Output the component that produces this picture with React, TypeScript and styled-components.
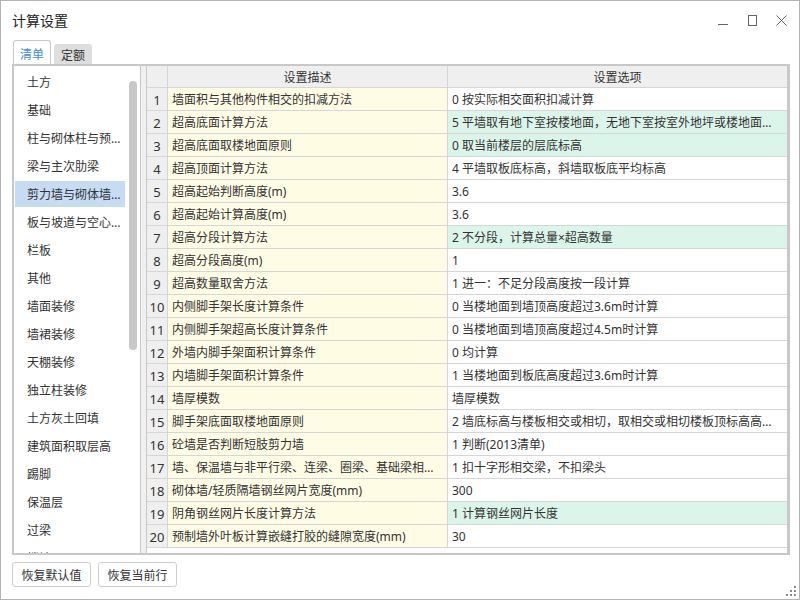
import styled, { createGlobalStyle } from "styled-components"

const GlobalStyle = createGlobalStyle`
  html, body {
    margin: 0;
    padding: 0;
    width: 800px;
    height: 600px;
    overflow: hidden;
    background: #fff;
  }
  * { box-sizing: border-box; }
`

const FONT = `"Noto Sans", "Noto Sans CJK SC", sans-serif`

const categories = [
    "土方", "基础", "柱与砌体柱与预制柱", "梁与主次肋梁", "剪力墙与砌体墙与保温墙",
    "板与坡道与空心楼盖", "栏板", "其他", "墙面装修", "墙裙装修", "天棚装修", "独立柱装修",
    "土方灰土回填", "建筑面积取层高", "踢脚", "保温层", "过梁", "楼地面",
]

interface IRow {
    desc: string;
    value: string;
    hl?: boolean
}

const rows: IRow[] = [
    {desc: "墙面积与其他构件相交的扣减方法", value: "0 按实际相交面积扣减计算"},
    {desc: "超高底面计算方法", value: "5 平墙取有地下室按楼地面，无地下室按室外地坪或楼地面标高；斜墙取底面平均标高", hl: true},
    {desc: "超高底面取楼地面原则", value: "0 取当前楼层的层底标高", hl: true},
    {desc: "超高顶面计算方法", value: "4 平墙取板底标高，斜墙取板底平均标高"},
    {desc: "超高起始判断高度(m)", value: "3.6"},
    {desc: "超高起始计算高度(m)", value: "3.6"},
    {desc: "超高分段计算方法", value: "2 不分段，计算总量×超高数量", hl: true},
    {desc: "超高分段高度(m)", value: "1"},
    {desc: "超高数量取舍方法", value: "1 进一：不足分段高度按一段计算"},
    {desc: "内侧脚手架长度计算条件", value: "0 当楼地面到墙顶高度超过3.6m时计算"},
    {desc: "内侧脚手架超高长度计算条件", value: "0 当楼地面到墙顶高度超过4.5m时计算"},
    {desc: "外墙内脚手架面积计算条件", value: "0 均计算"},
    {desc: "内墙脚手架面积计算条件", value: "1 当楼地面到板底高度超过3.6m时计算"},
    {desc: "墙厚模数", value: "墙厚模数"},
    {desc: "脚手架底面取楼地面原则", value: "2 墙底标高与楼板相交或相切，取相交或相切楼板顶标高高于墙底标高者"},
    {desc: "砼墙是否判断短肢剪力墙", value: "1 判断(2013清单)"},
    {desc: "墙、保温墙与非平行梁、连梁、圈梁、基础梁相交的扣减方法", value: "1 扣十字形相交梁，不扣梁头"},
    {desc: "砌体墙/轻质隔墙钢丝网片宽度(mm)", value: "300"},
    {desc: "阴角钢丝网片长度计算方法", value: "1 计算钢丝网片长度", hl: true},
    {desc: "预制墙外叶板计算嵌缝打胶的缝隙宽度(mm)", value: "30"},
]

const Window = styled.div`
  position: relative;
  width: 800px;
  height: 600px;
  border: 1px solid #b4b4b4;
  background: #fff;
  display: flex;
  flex-direction: column;
  font-family: ${FONT};
  color: #333;
`

const TitleBar = styled.div`
  height: 38px;
  flex: none;
  display: flex;
  align-items: center;
  justify-content: space-between;
  padding: 0 12px 0 11px;

  .title {
    font-size: 14px;
    color: #222;
  }
  .controls {
    display: flex;
    gap: 18px;
    align-items: center;
  }
`

const TabBar = styled.div`
  height: 25px;
  flex: none;
  display: flex;
  align-items: flex-end;
  gap: 3px;
  padding-left: 12px;
`

const Tab = styled.div<{ $active?: boolean }>`
  height: ${p => p.$active ? 24 : 20}px;
  padding: ${p => p.$active ? "2px 6px 0" : "1px 6px 0"};
  font-size: 12px;
  display: flex;
  align-items: center;
  border-radius: 3px 3px 0 0;
  border: 1px solid ${p => p.$active ? "#c8c8c8" : "#dedede"};
  border-bottom: none;
  background: ${p => p.$active ? "#fff" : "#dedede"};
  color: ${p => p.$active ? "#3d8be8" : "#333"};
`

const Panel = styled.div`
  height: 491px;
  flex: none;
  margin: 0 9px 0 11px;
  border: 2px solid #c8c8c8;
  display: flex;
`

const List = styled.div`
  width: 127px;
  flex: none;
  border-right: 1px solid #c8c8c8;
  display: flex;
  overflow: hidden;
`

const ListItems = styled.div`
  flex: 1;
  padding-top: 3px;
  overflow: hidden;
`

const ListItem = styled.div<{ $selected?: boolean }>`
  width: 110px;
  height: 26px;
  margin: 0 0 2px 1px;
  padding: 0 2px 0 12px;
  font-size: 12px;
  line-height: 28px;
  white-space: nowrap;
  overflow: hidden;
  text-overflow: ellipsis;
  background: ${p => p.$selected ? "#c5dcf2" : "transparent"};
`

const ScrollTrack = styled.div`
  width: 11px;
  flex: none;
  padding-top: 15px;

  .thumb {
    width: 8px;
    height: 269px;
    border-radius: 4px;
    background: #c8c8c8;
  }
`

const Splitter = styled.div`
  width: 5px;
  flex: none;
  background: #f0f0f0;
`

const Grid = styled.div`
  flex: 1;
  border-left: 1px solid #c8c8c8;
  border-right: 1px solid #c8c8c8;
  overflow: hidden;
`

const Row = styled.div<{ $head?: boolean }>`
  display: grid;
  grid-template-columns: 21px 280px 1fr;
  height: ${p => p.$head ? 22 : 23}px;
`

const Cell = styled.div<{ $bg: string; $center?: boolean; $last?: boolean }>`
  background: ${p => p.$bg};
  border-bottom: 1px solid #d6d6d6;
  border-right: ${p => p.$last ? "none" : "1px solid #d6d6d6"};
  font-size: 12px;
  line-height: 24px;
  padding: ${p => p.$center ? "0" : "0 8px 0 4px"};
  text-align: ${p => p.$center ? "center" : "left"};
  white-space: nowrap;
  overflow: hidden;
  text-overflow: ellipsis;
`

const NumCell = styled(Cell)`
  font-size: 13px;
`

const Footer = styled.div`
  display: flex;
  gap: 7px;
  padding: 7px 0 0 11px;
`

const Button = styled.button`
  width: 79px;
  height: 25px;
  border: 1px solid #cdcdcd;
  border-radius: 3px;
  background: #fff;
  font-family: ${FONT};
  font-size: 12px;
  color: #333;
  padding: 0;
`

const Grip = styled.svg`
  position: absolute;
  right: 2px;
  bottom: 2px;
`

const WinIcon = ({kind}: { kind: "min" | "max" | "close" }) => (
    <svg width="11" height="11" viewBox="0 0 11 11" fill="none" stroke="#666" strokeWidth="1">
        {kind === "min" && <line x1="0" y1="9.5" x2="10" y2="9.5"/>}
        {kind === "max" && <rect x="1.5" y="0.5" width="8" height="10"/>}
        {kind === "close" && <path d="M0.5 0.5 L10.5 10.5 M10.5 0.5 L0.5 10.5"/>}
    </svg>
)

const App = () => (
    <>
        <GlobalStyle/>
        <Window>
            <TitleBar>
                <span className="title">计算设置</span>
                <div className="controls">
                    <WinIcon kind="min"/>
                    <WinIcon kind="max"/>
                    <WinIcon kind="close"/>
                </div>
            </TitleBar>
            <TabBar>
                <Tab $active>清单</Tab>
                <Tab>定额</Tab>
            </TabBar>
            <Panel>
                <List>
                    <ListItems>
                        {categories.map((c, i) =>
                            <ListItem key={c} $selected={i === 4}>{c}</ListItem>)}
                    </ListItems>
                    <ScrollTrack><div className="thumb"/></ScrollTrack>
                </List>
                <Splitter/>
                <Grid>
                    <Row $head>
                        <Cell $bg="#efefef" $center/>
                        <Cell $bg="#efefef" $center>设置描述</Cell>
                        <Cell $bg="#efefef" $center $last>设置选项</Cell>
                    </Row>
                    {rows.map((r, i) => (
                        <Row key={i}>
                            <NumCell $bg="#efefef" $center>{i + 1}</NumCell>
                            <Cell $bg="#fffce6">{r.desc}</Cell>
                            <Cell $bg={r.hl ? "#dcf5ea" : "#fff"} $last>{r.value}</Cell>
                        </Row>
                    ))}
                </Grid>
            </Panel>
            <Footer>
                <Button>恢复默认值</Button>
                <Button>恢复当前行</Button>
            </Footer>
            <Grip width="11" height="11" viewBox="0 0 11 11" fill="#8a8a8a">
                <rect x="8" y="0" width="2" height="2"/>
                <rect x="4" y="4" width="2" height="2"/>
                <rect x="8" y="4" width="2" height="2"/>
                <rect x="0" y="8" width="2" height="2"/>
                <rect x="4" y="8" width="2" height="2"/>
                <rect x="8" y="8" width="2" height="2"/>
            </Grip>
        </Window>
    </>
)

export default App
